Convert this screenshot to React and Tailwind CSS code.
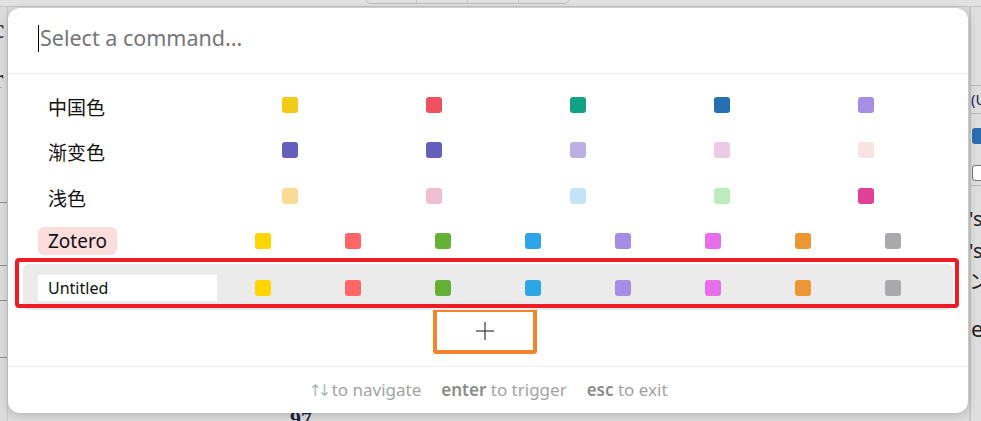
const palettes = [
  { name: "中国色", colors: ["#f2cb16", "#ef5160", "#12a182", "#2570b0", "#a58ee3"] },
  { name: "渐变色", colors: ["#645fbb", "#645fbb", "#bdaee3", "#ecc9e5", "#f9e2e2"] },
  { name: "浅色", colors: ["#f8dc96", "#f0bfcf", "#c2e4f6", "#bcebbc", "#e0409a"] },
];

const zotero = ["#ffd500", "#fe6667", "#65b136", "#2ea5e6", "#a78ce5", "#e86fea", "#ec9634", "#a9a9ac"];

function Swatch({ color }) {
  return <span className="block w-4 h-4 rounded-[3px]" style={{ backgroundColor: color }} />;
}

function PlusIcon() {
  return (
    <svg width="20" height="20" viewBox="0 0 20 20" fill="none" stroke="#444" strokeWidth="1.3">
      <line x1="10" y1="1" x2="10" y2="19" />
      <line x1="1" y1="10" x2="19" y2="10" />
    </svg>
  );
}

function Backdrop() {
  return (
    <>
      {/* page behind the dialog */}
      <div className="absolute left-0 right-0 top-0 h-[7px] border-b border-[#c4c4c4] bg-[#e2e2e2]" />
      <div className="absolute left-[365px] top-[-4px] w-[205px] h-[8px] rounded-b-[6px] border border-[#bdbdbd] flex">
        <span className="flex-1 border-r border-[#c8c8c8]" />
        <span className="flex-1 border-r border-[#c8c8c8]" />
        <span className="flex-1 border-r border-[#c8c8c8]" />
        <span className="flex-1" />
      </div>
      <div className="absolute left-0 top-[7px] bottom-0 w-[8px] border-r border-[#c9c9c9]">
        <span className="absolute left-[-8px] top-[8px] text-[28px] leading-none text-[#222] font-['Liberation_Serif',serif]">c</span>
        <span className="absolute left-[-6px] top-[58px] text-[28px] leading-none text-[#222] font-['Liberation_Serif',serif]">r</span>
        <span className="absolute left-0 right-0 top-[195px] border-t border-[#8d8d8d]" />
        <span className="absolute left-0 right-0 top-[258px] border-t border-[#8d8d8d]" />
        <span className="absolute left-0 right-0 top-[293px] border-t border-[#8d8d8d]" />
        <span className="absolute left-0 right-0 top-[350px] border-t border-[#8d8d8d]" />
      </div>
      <div className="absolute left-[969px] top-[7px] bottom-0 right-0 border-l-2 border-[#c6c6c6] bg-[#dedede]">
        <span className="absolute left-0 right-0 top-[78px] border-t border-[#b9b9b9]" />
        <span className="absolute left-0 top-[85px] text-[15px] leading-none text-[#1b2a52]">(U</span>
        <span className="absolute left-0 right-0 top-[106px] border-t border-[#b9b9b9]" />
        <span className="absolute left-[1px] top-[121px] w-[12px] h-[16px] rounded-[3px] bg-[#2b6cb0]" />
        <span className="absolute left-[1px] top-[158px] w-[12px] h-[16px] rounded-[3px] border border-[#777] bg-white" />
        <span className="absolute left-0 right-0 top-[178px] border-t border-[#b9b9b9]" />
        <span className="absolute left-[-2px] top-[202px] text-[20px] leading-none text-[#222]">'s</span>
        <span className="absolute left-[-2px] top-[234px] text-[20px] leading-none text-[#222]">'s</span>
        <span className="absolute left-[-2px] top-[264px] text-[20px] leading-none text-[#222] font-['Noto_Sans_CJK_JP',sans-serif]">ン</span>
        <span className="absolute left-0 top-[310px] text-[22px] leading-none text-[#222]">e</span>
      </div>
      <span className="absolute left-[290px] top-[408px] text-[22px] leading-none font-semibold text-[#1d2340] font-['Liberation_Serif',serif]">97</span>
    </>
  );
}

export default function App() {
  return (
    <div className="relative w-[981px] h-[421px] overflow-hidden bg-[#dcdcdc] font-['Noto_Sans','Noto_Sans_CJK_SC',sans-serif]">
      <Backdrop />
      <div className="absolute left-[8px] top-[8px] w-[960px] h-[405px] rounded-[12px] bg-white shadow-[0_2px_10px_rgba(0,0,0,0.18)] flex flex-col">
        <div className="h-[66px] shrink-0 border-b border-[#f0f0f0] flex items-center pl-[30px] pb-[5px]">
          <span className="w-px h-[27px] bg-black" />
          <span className="ml-[1px] text-[21.5px] text-[#767676] leading-none">Select a command...</span>
        </div>

        <div className="pt-[8px] flex flex-col">
          {palettes.map((p) => (
            <div key={p.name} className="mx-[15px] px-[15px] h-[45.5px] flex items-center">
              <div className="w-[180px] pl-[10px] pt-[7px] text-[19px] text-[#111] leading-none">{p.name}</div>
              <div className="flex-1 grid grid-cols-5 justify-items-center">
                {p.colors.map((c, i) => (
                  <Swatch key={i} color={c} />
                ))}
              </div>
            </div>
          ))}

          <div className="mx-[15px] px-[15px] h-[45.5px] flex items-center">
            <div className="w-[180px]">
              <span className="inline-block px-[10px] py-[4px] rounded-[6px] bg-[#fddcdc] text-[19px] leading-[20px] text-[#111]">Zotero</span>
            </div>
            <div className="flex-1 grid grid-cols-8 justify-items-center">
              {zotero.map((c, i) => (
                <Swatch key={i} color={c} />
              ))}
            </div>
          </div>

          <div className="relative mx-[15px] px-[15px] h-[45.5px] pt-[11px] flex items-start rounded-[6px] bg-[#ebebeb]">
            <div className="w-[180px]">
              <div className="w-[179px] h-[26px] bg-white pl-[10px] flex items-center text-[16px] text-[#111]">Untitled</div>
            </div>
            <div className="flex-1 grid grid-cols-8 justify-items-center pt-[5px]">
              {zotero.map((c, i) => (
                <Swatch key={i} color={c} />
              ))}
            </div>
            <div className="pointer-events-none absolute left-[-8px] right-[-6px] top-[-6.5px] bottom-[2px] border-4 border-[#ee1c25] rounded-[4px]" />
          </div>

          <div className="self-center mt-[-2px] mr-[6px] w-[104px] h-[46px] border-4 border-[#f6822b] rounded-[3px] flex items-center justify-center">
            <PlusIcon />
          </div>
        </div>

        <div className="mt-auto h-[47px] border-t border-[#f0f0f0] flex items-center justify-center gap-[20px] text-[17px] text-[#a3a3a3]">
          <span>
            <span className="font-['DejaVu_Sans',sans-serif] text-[16px] tracking-[-4px] text-[#a9b4c2]">↑↓</span>{" "}
            to navigate
          </span>
          <span>
            <b className="font-semibold text-[#8c8c8c]">enter</b> to trigger
          </span>
          <span>
            <b className="font-semibold text-[#8c8c8c]">esc</b> to exit
          </span>
        </div>
      </div>
    </div>
  );
}
